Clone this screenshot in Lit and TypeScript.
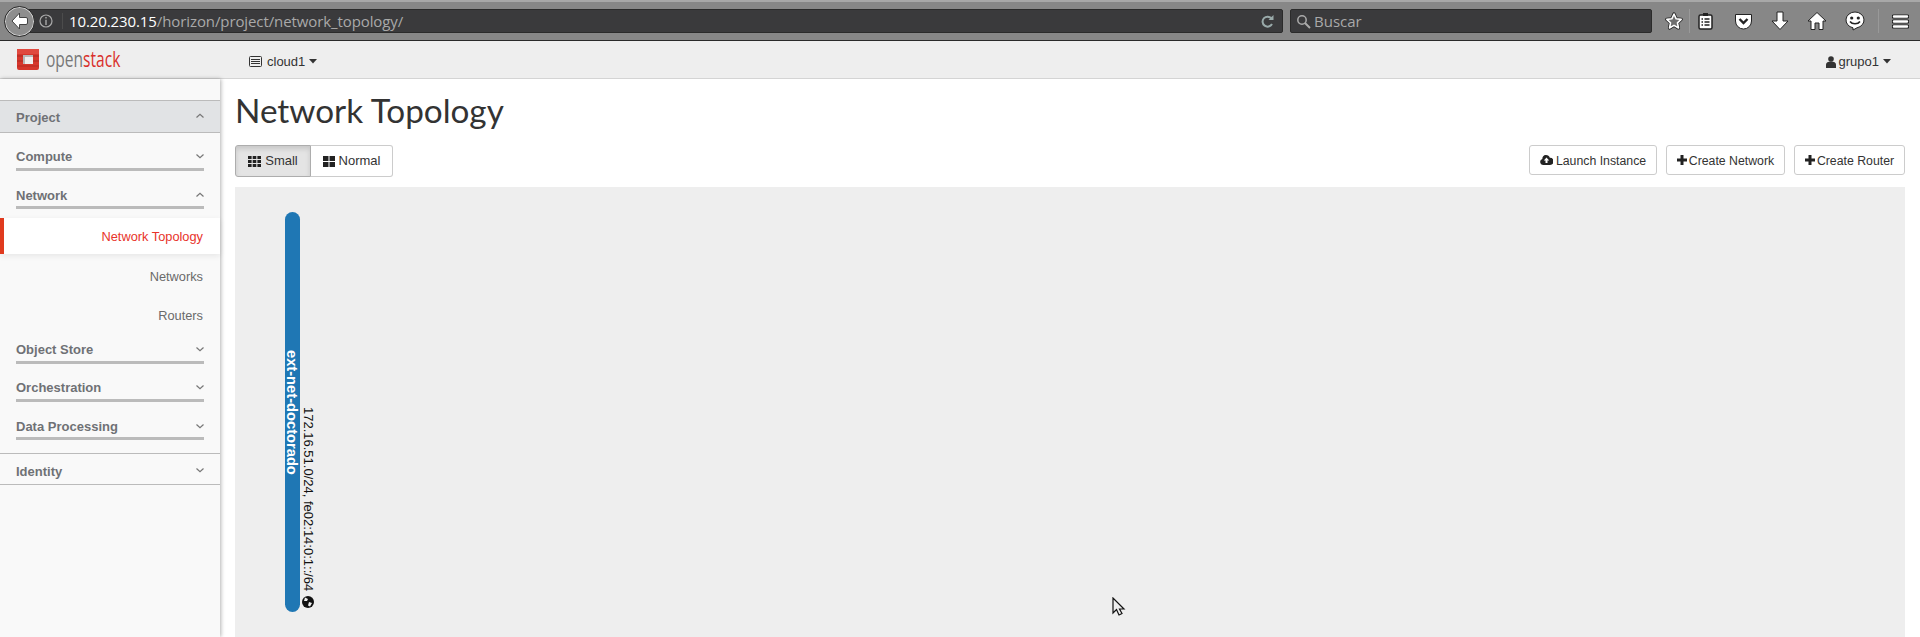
import { LitElement, html, css, svg } from 'lit';
import { customElement } from 'lit/decorators.js';

const chevron = (up: boolean) => html`<svg class="chev" width="8" height="6" viewBox="0 0 8 6">
  <polyline points=${up ? '0.500,4.500 4,1.200 7.500,4.500' : '0.500,1.500 4,4.800 7.500,1.500'} fill="none" stroke="#777" stroke-width="1.200"></polyline>
</svg>`;

const caret = html`<svg width="8" height="5" viewBox="0 0 8 5"><path d="M0 0h8L4 4.500z" fill="#333"></path></svg>`;

// toolbar icons get a dark outline and white fill, like the firefox theme
const tb = (w: number, h: number, body: unknown) => html`<svg width=${w} height=${h} viewBox="0 0 ${w} ${h}">${body}</svg>`;

@customElement('browser-bar')
export class BrowserBar extends LitElement {
  static styles = css`
    :host {
      display: flex;
      align-items: center;
      height: 41px;
      box-sizing: border-box;
      background: #878787;
      border-top: 2px solid #a8a8a8;
      border-bottom: 1px solid #2a2a2a;
      padding-left: 4px;
      font-family: 'Open Sans', sans-serif;
    }
    .back {
      width: 31px;
      height: 31px;
      flex: none;
      border-radius: 50%;
      background: #8e8e8e;
      border: 1px solid #2b2b2b;
      box-shadow: inset 0 0 0 1px #cfcfcf;
      margin-right: -10px;
      z-index: 1;
      display: flex;
      align-items: center;
      justify-content: center;
      box-sizing: border-box;
    }
    .field {
      height: 24px;
      box-sizing: border-box;
      background: #3a3a3c;
      border: 1px solid #2b2b2b;
      border-radius: 2px;
      display: flex;
      align-items: center;
    }
    .url {
      width: 1258px;
      flex: none;
      padding-left: 13px;
    }
    .info {
      width: 23px;
      height: 16px;
      border-right: 1px solid #4c4c4c;
      margin-right: 6px;
      flex: none;
      display: flex;
      align-items: center;
    }
    .addr {
      font-size: 15px;
      letter-spacing: -0.1px;
      color: #fff;
      flex: 1;
      white-space: nowrap;
    }
    .addr span {
      color: #a9a9a9;
    }
    .reload {
      margin-right: 8px;
      display: flex;
    }
    .search {
      width: 362px;
      flex: none;
      margin-left: 7px;
      padding-left: 5px;
      gap: 3px;
      font-size: 15px;
      color: #a9a9a9;
    }
    .icons {
      display: flex;
      align-items: center;
      margin-left: 13px;
    }
    .icons svg {
      flex: none;
      display: block;
    }
    .tool {
      margin-left: 18px;
      display: block;
    }
    .tool.first {
      margin-left: 21px;
    }
    .sep {
      width: 1px;
      height: 24px;
      background: #999;
    }
    .sep.a {
      margin: 0 8px 0 6px;
    }
    .sep.b {
      margin: 0 13px 0 13px;
    }
  `;

  render() {
    return html`
      <div class="back">
        ${tb(17, 18, svg`<path d="M8.500 1 1 9l7.500 8v-4.500h6.500a1.500 1.500 0 0 0 1.500-1.500V7a1.500 1.500 0 0 0-1.500-1.500H8.500z" fill="#fff" stroke="#444" stroke-width="1"/>`)}
      </div>
      <div class="field url">
        <div class="info">
          ${tb(14, 14, svg`<circle cx="7" cy="7" r="6" fill="none" stroke="#aaa" stroke-width="1.200"/><path d="M6.300 3h1.400v1.400H6.300zM6.300 5.800h1.400V11H6.300z" fill="#aaa"/>`)}
        </div>
        <div class="addr">10.20.230.15<span>/horizon/project/network_topology/</span></div>
        <div class="reload">
          ${tb(13, 14, svg`<path d="M10.500 4.500A5 5 0 1 0 11 10" fill="none" stroke="#9aa" stroke-width="2"/><path d="M12.500 1v5h-5z" fill="#9aa"/>`)}
        </div>
      </div>
      <div class="field search">
        ${tb(15, 15, svg`<circle cx="6" cy="6" r="4.200" fill="none" stroke="#aaa" stroke-width="1.500"/><path d="M9 9l5 5" stroke="#aaa" stroke-width="2"/>`)}
        <span>Buscar</span>
      </div>
      <div class="icons">
        ${tb(18, 18, svg`<path d="M9 2l2.200 4.800 5 .6-3.700 3.400 1 5.200L9 13.400 4.500 16l1-5.200-3.700-3.400 5-.6z" fill="#6e6e6e" stroke="#222" stroke-width="3.200" stroke-linejoin="round"/><path d="M9 2l2.200 4.800 5 .6-3.700 3.400 1 5.200L9 13.400 4.500 16l1-5.200-3.700-3.400 5-.6z" fill="#6e6e6e" stroke="#fff" stroke-width="1.600" stroke-linejoin="round"/>`)}
        <span class="sep a"></span>
        ${tb(15, 18, svg`<rect x="1" y="3" width="13" height="14" rx="1.500" fill="#fff" stroke="#222" stroke-width="1.500"/><rect x="5" y="1" width="5" height="3" fill="#222"/><path d="M3.500 7h1.500M6.500 7h5M3.500 10h1.500M6.500 10h5M3.500 13h1.500M6.500 13h5" stroke="#222" stroke-width="1.600"/>`)}
        <span class="tool first">${tb(19, 17, svg`<path d="M1.500 1.500h16v6.500a8 8 0 0 1-16 0z" fill="#fff" stroke="#222" stroke-width="1"/><path d="M5.500 6l4 4 4-4" fill="none" stroke="#222" stroke-width="2.400"/>`)}</span>
        <span class="tool">${tb(18, 20, svg`<path d="M6 1h6v9h5L9 18.500 1 10h5z" fill="#fff" stroke="#222" stroke-width="1"/>`)}</span>
        <span class="tool">${tb(20, 20, svg`<path d="M10 1.500 19 10h-3v8.500h-4V12H8v6.500H4V10H1z" fill="#fff" stroke="#222" stroke-width="1"/>`)}</span>
        <span class="tool">${tb(20, 20, svg`<path d="M10 1a9 8 0 0 1 2 15.800L8 19v-2.200A9 8 0 0 1 10 1z" fill="#fff" stroke="#222" stroke-width="1"/><circle cx="6.700" cy="7" r="1.600" fill="#222"/><circle cx="13.300" cy="7" r="1.600" fill="#222"/><path d="M5 10.500c2.200 3 7.800 3 10 0" fill="none" stroke="#222" stroke-width="1.600"/>`)}</span>
        <span class="sep b"></span>
        ${tb(17, 15, svg`<path d="M1.500 2.500h14M1.500 7.500h14M1.500 12.500h14" stroke="#222" stroke-width="4" stroke-linecap="round"/><path d="M2 2.500h13M2 7.500h13M2 12.500h13" stroke="#fff" stroke-width="2.400" stroke-linecap="round"/>`)}
      </div>
    `;
  }
}

@customElement('top-nav')
export class TopNav extends LitElement {
  static styles = css`
    :host {
      display: flex;
      align-items: center;
      height: 38px;
      box-sizing: border-box;
      background: #eee;
      border-bottom: 1px solid #d4d4d4;
      padding: 4px 0 0 16px;
      font: 13px 'Liberation Sans', sans-serif;
      color: #333;
    }
    .logo {
      display: flex;
      align-items: center;
      width: 233px;
      flex: none;
      margin-top: -6px;
    }
    .word {
      font: 21px 'Open Sans', sans-serif;
      color: #777;
      margin-left: 6px;
      display: inline-block;
      transform: scaleX(0.74);
      transform-origin: left center;
      white-space: nowrap;
    }
    .word b {
      font-weight: 400;
      color: #d9302b;
    }
    .menu {
      display: flex;
      align-items: center;
      gap: 4px;
    }
    .user {
      margin-left: auto;
      margin-right: 29px;
    }
  `;

  render() {
    return html`
      <div class="logo">
        <svg width="24" height="24" viewBox="0 0 24 24">
          <path d="M1 2h21a2 2 0 0 1 1 2v17a2 2 0 0 1-2 2H3a2 2 0 0 1-2-2z" fill="#d6362c"></path>
          <path d="M1 2h22v5H1z" fill="#e0493f"></path>
          <path d="M7 8h10v9H7z" fill="#eee"></path>
          <path d="M7 8h10v2H9v7H7z" fill="#b8b8b8"></path>
          <path d="M1 9h6M1 14h6M17 9h6M17 14h6" stroke="#a92a22" stroke-width="1"></path>
          <path d="M1 19h22" stroke="#b52a22" stroke-width="1"></path>
        </svg>
        <span class="word">open<b>stack</b></span>
      </div>
      <div class="menu">
        <svg width="13" height="11" viewBox="0 0 13 11" style="margin-right:1px">
          <rect x="0.500" y="0.500" width="12" height="10" rx="1" fill="none" stroke="#333"></rect>
          <path d="M2 3.500h9M2 5.500h9M2 7.500h9" stroke="#333"></path>
        </svg>
        cloud1 ${caret}
      </div>
      <div class="menu user">
        <svg width="10" height="12" viewBox="0 0 10 12" style="margin-right:-1px">
          <circle cx="5" cy="3" r="2.800" fill="#333"></circle>
          <path d="M0 12V8.500C0 6.500 2 5.500 5 5.500s5 1 5 3V12z" fill="#333"></path>
        </svg>
        grupo1 ${caret}
      </div>
    `;
  }
}

@customElement('side-nav')
export class SideNav extends LitElement {
  static styles = css`
    :host {
      display: block;
      width: 220px;
      flex: none;
      box-sizing: border-box;
      background: #f9f9f9;
      box-shadow: 1px 0 4px rgba(0, 0, 0, 0.3);
      padding-top: 21px;
      font: 13px 'Liberation Sans', sans-serif;
      color: #6a6a6a;
      position: relative;
    }
    .head {
      display: flex;
      align-items: center;
      justify-content: space-between;
      font-weight: 700;
      color: #6f7175;
    }
    .project {
      height: 33px;
      box-sizing: border-box;
      background: #e1e3e5;
      border-top: 1px solid #bbb;
      border-bottom: 1px solid #bbb;
      padding: 2px 16px 0;
    }
    .project .chev {
      margin-top: -4px;
    }
    .group {
      height: 30px;
      box-sizing: border-box;
      margin: 8px 16px 0;
      border-bottom: 3px solid #bbb;
      padding-bottom: 4px;
      align-items: flex-end;
    }
    .group.low {
      padding-bottom: 3px;
    }
    .group.flush {
      margin-top: 0;
    }
    .group .chev {
      margin-bottom: 5px;
    }
    .item {
      height: 38px;
      display: flex;
      align-items: center;
      justify-content: flex-end;
      padding-right: 17px;
      font-size: 12.800px;
    }
    .item.active {
      height: 36px;
      margin: 9px 0 3px;
      background: #fff;
      border-left: 4px solid #e03a1e;
      color: #e8332a;
      box-shadow: 0 2px 6px rgba(0, 0, 0, 0.08);
    }
    .item.last {
      height: 39px;
      padding-top: 1px;
      box-sizing: border-box;
    }
    .identity {
      height: 32px;
      box-sizing: border-box;
      margin-top: 13px;
      border-top: 1px solid #bbb;
      border-bottom: 1px solid #bbb;
      padding: 4px 16px 0;
    }
    .identity .chev {
      margin-top: -2px;
    }
  `;

  render() {
    return html`
      <div class="head project">Project ${chevron(true)}</div>
      <div class="head group">Compute ${chevron(false)}</div>
      <div class="head group low">Network ${chevron(true)}</div>
      <div class="item active">Network Topology</div>
      <div class="item">Networks</div>
      <div class="item last">Routers</div>
      <div class="head group flush">Object Store ${chevron(false)}</div>
      <div class="head group">Orchestration ${chevron(false)}</div>
      <div class="head group low">Data Processing ${chevron(false)}</div>
      <div class="head identity">Identity ${chevron(false)}</div>
    `;
  }
}

@customElement('topology-view')
export class TopologyView extends LitElement {
  static styles = css`
    :host {
      display: flex;
      flex-direction: column;
      flex: 1;
      min-width: 0;
      padding: 0 15px;
      background: #fff;
      font: 13px 'Liberation Sans', sans-serif;
      color: #333;
    }
    h1 {
      margin: 0;
      height: 66px;
      box-sizing: border-box;
      padding: 8px 0 0;
      font: 400 33.300px/46px Lato, sans-serif;
      color: #333;
      white-space: nowrap;
    }
    .bar {
      display: flex;
      justify-content: space-between;
      align-items: flex-start;
      height: 42px;
    }
    .seg {
      display: flex;
    }
    .btn {
      display: flex;
      align-items: center;
      justify-content: center;
      gap: 2px;
      box-sizing: border-box;
      height: 30px;
      background: #fff;
      border: 1px solid #ccc;
      border-radius: 3px;
      color: #333;
      font-size: 12.300px;
      line-height: 16px;
    }
    .btn span {
      padding-top: 1px;
    }
    .seg .btn {
      height: 32px;
      gap: 4px;
      font-size: 13px;
    }
    .seg .small {
      width: 76px;
      background: #e4e4e4;
      border-color: #adadad;
      border-radius: 3px 0 0 3px;
      box-shadow: inset 0 3px 5px rgba(0, 0, 0, 0.125);
    }
    .seg .normal {
      width: 82px;
      border-left: 0;
      border-radius: 0 3px 3px 0;
    }
    .actions {
      display: flex;
      gap: 9px;
    }
    .launch {
      width: 128px;
      gap: 3px;
    }
    .net {
      width: 119px;
    }
    .rtr {
      width: 111px;
    }
    .canvas {
      flex: 1;
      background: #eee;
      position: relative;
      overflow: hidden;
    }
    .network {
      position: absolute;
      left: 50px;
      top: 25px;
      width: 15px;
      height: 400px;
      border-radius: 8px;
      background: #1f77b4;
    }
    .name {
      position: absolute;
      left: -1px;
      top: 138px;
      width: 15px;
      line-height: 15px;
      writing-mode: vertical-rl;
      font-weight: 700;
      font-size: 14.700px;
      color: #fff;
      white-space: nowrap;
    }
    .cidr {
      position: absolute;
      left: 67px;
      top: 220px;
      line-height: 12px;
      writing-mode: vertical-rl;
      font-size: 13px;
      color: #111;
      white-space: nowrap;
    }
    .globe {
      position: absolute;
      left: 67px;
      top: 409px;
    }
    .cursor {
      position: absolute;
      left: 877px;
      top: 410px;
    }
  `;

  render() {
    return html`
      <h1>Network Topology</h1>
      <div class="bar">
        <div class="seg">
          <div class="btn small">
            <svg width="13" height="11" viewBox="0 0 13 11" fill="#222">
              <path d="M0 0h3.600v3H0zM4.700 0h3.600v3H4.700zM9.400 0H13v3H9.400zM0 4h3.600v3H0zM4.700 4h3.600v3H4.700zM9.400 4H13v3H9.400zM0 8h3.600v3H0zM4.700 8h3.600v3H4.700zM9.400 8H13v3H9.400z"></path>
            </svg>
            Small
          </div>
          <div class="btn normal">
            <svg width="12" height="11" viewBox="0 0 12 11" fill="#222">
              <path d="M0 0h5.500v5H0zM6.500 0H12v5H6.500zM0 6h5.500v5H0zM6.500 6H12v5H6.500z"></path>
            </svg>
            Normal
          </div>
        </div>
        <div class="actions">
          <div class="btn launch">
            <svg width="13" height="10" viewBox="0 0 13 10">
              <path d="M3 10a3 3 0 0 1-.6-5.900A3.500 3.500 0 0 1 6 0a4 4 0 0 1 3.800 2.800A3.600 3.600 0 0 1 10 10z" fill="#222"></path>
              <path d="M6.500 2.500 3.800 5.500h1.700V8h2V5.500h1.700z" fill="#fff"></path>
            </svg>
            <span>Launch Instance</span>
          </div>
          <div class="btn net">
            <svg width="10" height="10" viewBox="0 0 10 10"><path d="M3.500 0h3v3.500H10v3H6.500V10h-3V6.500H0v-3h3.500z" fill="#222"></path></svg>
            <span>Create Network</span>
          </div>
          <div class="btn rtr">
            <svg width="10" height="10" viewBox="0 0 10 10"><path d="M3.500 0h3v3.500H10v3H6.500V10h-3V6.500H0v-3h3.500z" fill="#222"></path></svg>
            <span>Create Router</span>
          </div>
        </div>
      </div>
      <div class="canvas">
        <div class="network"><span class="name">ext-net-doctorado</span></div>
        <span class="cidr">172.16.51.0/24, fe02:14:0:1::/64</span>
        <svg class="globe" width="12" height="12" viewBox="0 0 12 12">
          <circle cx="6" cy="6" r="6" fill="#111"></circle>
          <path d="M3 1.500 6 3 5 5 2 5zM7 6l3 1-2 3.500-2-1z" fill="#eee"></path>
        </svg>
        <svg class="cursor" width="14" height="20" viewBox="0 0 14 20">
          <path d="M1 1v15l3.500-3.500L7 18l3-1.500-2.500-4.500H12z" fill="#eee" stroke="#111" stroke-width="1.200"></path>
        </svg>
      </div>
    `;
  }
}

@customElement('app-root')
export class AppRoot extends LitElement {
  static styles = css`
    :host {
      display: flex;
      flex-direction: column;
      height: 637px;
      overflow: hidden;
      background: #fff;
    }
    .page {
      display: flex;
      flex: 1;
      min-height: 0;
    }
  `;

  render() {
    return html`
      <browser-bar></browser-bar>
      <top-nav></top-nav>
      <div class="page">
        <side-nav></side-nav>
        <topology-view></topology-view>
      </div>
    `;
  }
}
